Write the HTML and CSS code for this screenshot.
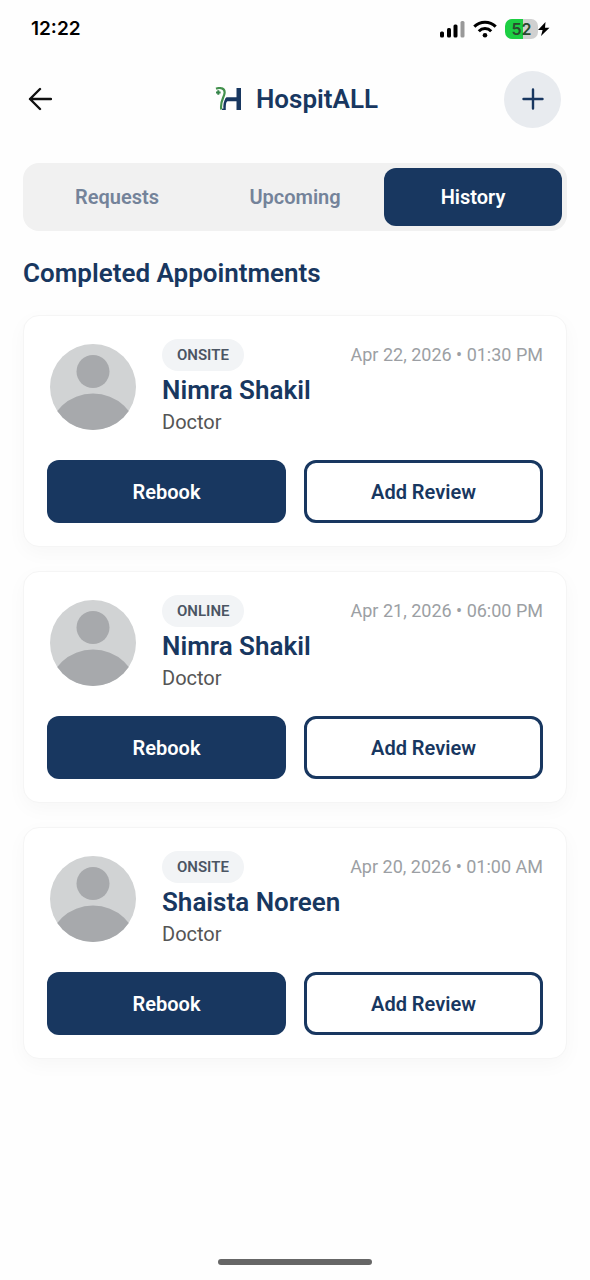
FILE: index.html
```html
<!DOCTYPE html>
<html lang="en">
<head>
<meta charset="utf-8">
<meta name="viewport" content="width=device-width, initial-scale=1">
<title>HospitALL – Appointments</title>
<link rel="stylesheet" href="styles.css">
</head>
<body>
<div class="screen">
  <div class="status">
    <span class="clock">12:22</span>
    <div class="status-icons">
      <svg class="signal" viewBox="0 0 26 18" aria-hidden="true"><rect x="1" y="11.500" width="4" height="6" rx="1.500"/><rect x="8" y="8" width="4" height="9.500" rx="1.500"/><rect x="14.500" y="4.500" width="4" height="13" rx="1.500"/><rect x="21.500" y="1" width="4" height="16.500" rx="1.500" fill="#999"/></svg>
      <svg class="wifi" viewBox="0 0 24 18" aria-hidden="true"><g fill="none" stroke="#000" stroke-width="3"><path d="M1.300 6.600C7.200 .8 16.800 .8 22.700 6.600"/><path d="M5.800 11.200C9.200 7.700 14.800 7.700 18.200 11.200"/></g><circle cx="12" cy="15.200" r="2.300"/></svg>
      <div class="power">
        <span class="battery">52</span>
        <svg class="bolt" viewBox="0 0 12 14" aria-hidden="true"><path d="M7.500 0 0 8h4.600L3 14l8.500-8.300H7z"/></svg>
      </div>
    </div>
  </div>

  <header class="header">
    <button class="back" type="button" aria-label="Back"><svg viewBox="0 0 24 24" aria-hidden="true"><path d="M23 12H2M12 2 2 12l10 10" fill="none" stroke="#111" stroke-width="2.400" stroke-linecap="round" stroke-linejoin="round"/></svg></button>
    <div class="brand">
      <svg class="logo" viewBox="4 4 27 24" aria-hidden="true">
        <path d="M25.500 5H30v22h-4.500v-8.800H17c-1.800 0-2.200 2-2.200 8.800H11c0-5 .6-8.600 3.600-12 .8-.8 1.400-.8 2.400-.8h8.500z" fill="#183760"/>
        <path d="M5 6C9 4.200 13.800 5 13.800 9.800c0 5-4.600 8-3.200 16" fill="none" stroke="#fff" stroke-width="3.800"/>
        <path d="M5 5.800C9 4.200 14 5 13.600 9.800 13.300 14.500 8.800 18 10.300 26.500" fill="none" stroke="#43914d" stroke-width="2.200"/>
        <path d="M7.300 7.200v4.600M5 9.500h4.600" stroke="#35844a" stroke-width="2"/>
      </svg>
      <span class="brand-name">HospitALL</span>
    </div>
    <button class="add" type="button" aria-label="New appointment"><svg viewBox="0 0 24 24" aria-hidden="true"><path d="M12 2.500v19M2.500 12h19" stroke="#183760" stroke-width="2.400" stroke-linecap="round"/></svg></button>
  </header>

  <main class="content">
    <nav class="tabs" aria-label="Appointments">
      <button class="tab" type="button">Requests</button>
      <button class="tab" type="button">Upcoming</button>
      <button class="tab active" type="button" aria-current="true">History</button>
    </nav>
    <h1 class="title">Completed Appointments</h1>
    <div class="list">
      <article class="card">
        <div class="info">
          <svg class="avatar" viewBox="0 0 88 88" role="img" aria-label="Profile photo"><defs><clipPath id="disc"><circle cx="44" cy="44" r="43"/></clipPath></defs><g clip-path="url(#disc)"><rect width="88" height="88" fill="#d1d3d4"/><circle cx="44" cy="28.500" r="16.500" fill="#a7a9ac"/><ellipse cx="44" cy="92" rx="44" ry="41.500" fill="#a7a9ac"/></g></svg>
          <div class="details">
            <div class="meta"><span class="badge">ONSITE</span><time class="date">Apr 22, 2026 • 01:30 PM</time></div>
            <h2 class="name">Nimra Shakil</h2>
            <p class="role">Doctor</p>
          </div>
        </div>
        <div class="actions"><button class="btn primary" type="button">Rebook</button><button class="btn outline" type="button">Add Review</button></div>
      </article>
      <article class="card">
        <div class="info">
          <svg class="avatar" viewBox="0 0 88 88" role="img" aria-label="Profile photo"><g clip-path="url(#disc)"><rect width="88" height="88" fill="#d1d3d4"/><circle cx="44" cy="28.500" r="16.500" fill="#a7a9ac"/><ellipse cx="44" cy="92" rx="44" ry="41.500" fill="#a7a9ac"/></g></svg>
          <div class="details">
            <div class="meta"><span class="badge">ONLINE</span><time class="date">Apr 21, 2026 • 06:00 PM</time></div>
            <h2 class="name">Nimra Shakil</h2>
            <p class="role">Doctor</p>
          </div>
        </div>
        <div class="actions"><button class="btn primary" type="button">Rebook</button><button class="btn outline" type="button">Add Review</button></div>
      </article>
      <article class="card">
        <div class="info">
          <svg class="avatar" viewBox="0 0 88 88" role="img" aria-label="Profile photo"><g clip-path="url(#disc)"><rect width="88" height="88" fill="#d1d3d4"/><circle cx="44" cy="28.500" r="16.500" fill="#a7a9ac"/><ellipse cx="44" cy="92" rx="44" ry="41.500" fill="#a7a9ac"/></g></svg>
          <div class="details">
            <div class="meta"><span class="badge">ONSITE</span><time class="date">Apr 20, 2026 • 01:00 AM</time></div>
            <h2 class="name">Shaista Noreen</h2>
            <p class="role">Doctor</p>
          </div>
        </div>
        <div class="actions"><button class="btn primary" type="button">Rebook</button><button class="btn outline" type="button">Add Review</button></div>
      </article>
    </div>
  </main>
  <div class="home-indicator"></div>
</div>
</body>
</html>
```
FILE: styles.css
```css
* { box-sizing: border-box; }
body {
  margin: 0;
  background: #fefefe;
  color: #183760;
  font-family: Roboto, "Liberation Sans", sans-serif;
}
button { border: 0; padding: 0; font: inherit; color: inherit; cursor: pointer; }
svg { display: block; }
h1, h2, p { margin: 0; }

.screen { min-height: 100vh; display: flex; flex-direction: column; }

.status {
  display: flex;
  justify-content: space-between;
  align-items: center;
  height: 58px;
  padding: 0 40px 0 31px;
}
.clock { font: 600 19px/24px Inter, sans-serif; color: #000; }
.status-icons { display: flex; align-items: center; gap: 8px; }
.signal { width: 26px; height: 18px; }
.wifi { width: 24px; height: 18px; }
.power { display: flex; align-items: center; }
.battery {
  width: 33px;
  height: 20px;
  border-radius: 7px;
  background: linear-gradient(to right, #1dce43 56%, #d0d0d0 56%);
  color: #2b4a2f;
  font: 600 16px/20px Inter, sans-serif;
  text-align: center;
}
.bolt { width: 12px; height: 14px; }

.header {
  display: grid;
  grid-template-columns: 1fr auto 1fr;
  align-items: center;
  height: 82px;
  padding: 0 29px 0 28px;
}
.back { width: 24px; height: 24px; background: none; }
.brand { display: flex; align-items: center; gap: 14px; padding-left: 4px; }
.logo { width: 27px; height: 24px; }
.brand-name { font-size: 26px; line-height: 32px; font-weight: 600; }
.add {
  display: grid;
  place-items: center;
  justify-self: end;
  width: 57px;
  height: 57px;
  border-radius: 50%;
  background: #e8ebef;
}
.add svg { width: 24px; height: 24px; }

.content { flex: 1; padding: 23px 23px 24px; }
.tabs {
  display: grid;
  grid-template-columns: repeat(3, 1fr);
  padding: 5px;
  border-radius: 16px;
  background: #f1f1f1;
}
.tab {
  height: 58px;
  border-radius: 12px;
  background: none;
  color: #74839a;
  font-size: 20px;
  font-weight: 600;
}
.tab.active { background: #183760; color: #fff; }
.title { margin: 26px 0; font-size: 26px; line-height: 32px; font-weight: 600; }

.list { display: grid; gap: 24px; }
.card {
  padding: 23px;
  border: 1px solid #f5f5f5;
  border-radius: 16px;
  background: #fff;
  box-shadow: 0 6px 20px rgba(0, 0, 0, 0.03);
}
.info { display: flex; align-items: center; gap: 25px; padding-left: 2px; }
.avatar { flex: none; width: 88px; height: 88px; }
.details { flex: 1; min-width: 0; }
.meta { display: flex; justify-content: space-between; align-items: center; }
.badge {
  padding: 0 15px;
  border-radius: 16px;
  background: #f2f4f6;
  color: #4b5563;
  font-size: 15px;
  line-height: 32px;
  font-weight: 600;
}
.date { color: #9c9fa4; font-size: 18px; line-height: 24px; }
.name { font-size: 26px; line-height: 38px; font-weight: 600; }
.role { color: #555; font-size: 20px; line-height: 26px; }
.actions { display: grid; grid-template-columns: 1fr 1fr; gap: 18px; margin-top: 25px; }
.btn { height: 63px; border-radius: 12px; font-size: 20px; font-weight: 600; }
.primary { background: #183760; color: #fff; }
.outline { border: 3px solid #183760; background: #fff; }

.home-indicator {
  align-self: center;
  width: 26%;
  height: 6px;
  margin-bottom: 15px;
  border-radius: 3px;
  background: #666;
}
```
